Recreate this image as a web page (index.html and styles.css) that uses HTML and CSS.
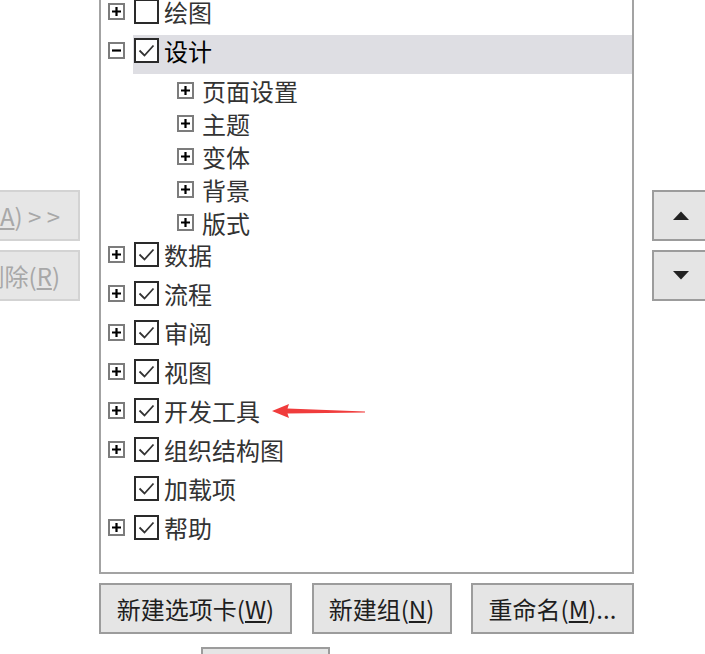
FILE: index.html
```html
<!DOCTYPE html>
<html lang="zh-CN">
<head>
<meta charset="utf-8">
<link rel="stylesheet" href="styles.css">
</head>
<body>
<div class="page">
  <div class="left-col">
    <div class="btn btn-disabled">添加(<u>A</u>) &gt; &gt;</div>
    <div class="btn btn-disabled">删除(<u>R</u>)</div>
  </div>

  <div class="center-col">
    <div class="tree">
      <div class="row">
        <div class="exp"><svg class="pm" viewBox="0 0 17 17"><rect x="1" y="1" width="15" height="15" fill="#fff" stroke="#7c7c7c" stroke-width="2"/><path d="M4 8.5H13M8.5 4V13" stroke="#000" stroke-width="2.2"/></svg></div>
        <div class="item"><span class="cb"></span><span class="label">绘图</span></div>
      </div>
      <div class="row sel">
        <div class="exp"><svg class="pm" viewBox="0 0 17 17"><rect x="1" y="1" width="15" height="15" fill="#fff" stroke="#7c7c7c" stroke-width="2"/><path d="M4 8.5H13" stroke="#000" stroke-width="2.2"/></svg></div>
        <div class="item"><span class="cb checked"><svg viewBox="0 0 21 21"><path d="M3.5 10.5L8.5 15.5L17.5 5.5" fill="none" stroke="#333" stroke-width="1.8"/></svg></span><span class="label dark">设计</span></div>
      </div>
      <div class="subrow"><svg class="pm" viewBox="0 0 17 17"><rect x="1" y="1" width="15" height="15" fill="#fff" stroke="#7c7c7c" stroke-width="2"/><path d="M4 8.5H13M8.5 4V13" stroke="#000" stroke-width="2.2"/></svg><span class="label">页面设置</span></div>
      <div class="subrow"><svg class="pm" viewBox="0 0 17 17"><rect x="1" y="1" width="15" height="15" fill="#fff" stroke="#7c7c7c" stroke-width="2"/><path d="M4 8.5H13M8.5 4V13" stroke="#000" stroke-width="2.2"/></svg><span class="label">主题</span></div>
      <div class="subrow"><svg class="pm" viewBox="0 0 17 17"><rect x="1" y="1" width="15" height="15" fill="#fff" stroke="#7c7c7c" stroke-width="2"/><path d="M4 8.5H13M8.5 4V13" stroke="#000" stroke-width="2.2"/></svg><span class="label">变体</span></div>
      <div class="subrow"><svg class="pm" viewBox="0 0 17 17"><rect x="1" y="1" width="15" height="15" fill="#fff" stroke="#7c7c7c" stroke-width="2"/><path d="M4 8.5H13M8.5 4V13" stroke="#000" stroke-width="2.2"/></svg><span class="label">背景</span></div>
      <div class="subrow"><svg class="pm" viewBox="0 0 17 17"><rect x="1" y="1" width="15" height="15" fill="#fff" stroke="#7c7c7c" stroke-width="2"/><path d="M4 8.5H13M8.5 4V13" stroke="#000" stroke-width="2.2"/></svg><span class="label">版式</span></div>

      <div class="row">
        <div class="exp"><svg class="pm" viewBox="0 0 17 17"><rect x="1" y="1" width="15" height="15" fill="#fff" stroke="#7c7c7c" stroke-width="2"/><path d="M4 8.5H13M8.5 4V13" stroke="#000" stroke-width="2.2"/></svg></div>
        <div class="item"><span class="cb checked"><svg viewBox="0 0 21 21"><path d="M3.5 10.5L8.5 15.5L17.5 5.5" fill="none" stroke="#333" stroke-width="1.8"/></svg></span><span class="label">数据</span></div>
      </div>
      <div class="row">
        <div class="exp"><svg class="pm" viewBox="0 0 17 17"><rect x="1" y="1" width="15" height="15" fill="#fff" stroke="#7c7c7c" stroke-width="2"/><path d="M4 8.5H13M8.5 4V13" stroke="#000" stroke-width="2.2"/></svg></div>
        <div class="item"><span class="cb checked"><svg viewBox="0 0 21 21"><path d="M3.5 10.5L8.5 15.5L17.5 5.5" fill="none" stroke="#333" stroke-width="1.8"/></svg></span><span class="label">流程</span></div>
      </div>
      <div class="row">
        <div class="exp"><svg class="pm" viewBox="0 0 17 17"><rect x="1" y="1" width="15" height="15" fill="#fff" stroke="#7c7c7c" stroke-width="2"/><path d="M4 8.5H13M8.5 4V13" stroke="#000" stroke-width="2.2"/></svg></div>
        <div class="item"><span class="cb checked"><svg viewBox="0 0 21 21"><path d="M3.5 10.5L8.5 15.5L17.5 5.5" fill="none" stroke="#333" stroke-width="1.8"/></svg></span><span class="label">审阅</span></div>
      </div>
      <div class="row">
        <div class="exp"><svg class="pm" viewBox="0 0 17 17"><rect x="1" y="1" width="15" height="15" fill="#fff" stroke="#7c7c7c" stroke-width="2"/><path d="M4 8.5H13M8.5 4V13" stroke="#000" stroke-width="2.2"/></svg></div>
        <div class="item"><span class="cb checked"><svg viewBox="0 0 21 21"><path d="M3.5 10.5L8.5 15.5L17.5 5.5" fill="none" stroke="#333" stroke-width="1.8"/></svg></span><span class="label">视图</span></div>
      </div>
      <div class="row">
        <div class="exp"><svg class="pm" viewBox="0 0 17 17"><rect x="1" y="1" width="15" height="15" fill="#fff" stroke="#7c7c7c" stroke-width="2"/><path d="M4 8.5H13M8.5 4V13" stroke="#000" stroke-width="2.2"/></svg></div>
        <div class="item"><span class="cb checked"><svg viewBox="0 0 21 21"><path d="M3.5 10.5L8.5 15.5L17.5 5.5" fill="none" stroke="#333" stroke-width="1.8"/></svg></span><span class="label">开发工具</span>
          <svg class="arrow" viewBox="0 0 94 16"><path d="M0 8L17 1L15.5 5.5L93 8.6L93 9.4L15.5 10.5L17 15Z" fill="#f03c3c"/></svg>
        </div>
      </div>
      <div class="row">
        <div class="exp"><svg class="pm" viewBox="0 0 17 17"><rect x="1" y="1" width="15" height="15" fill="#fff" stroke="#7c7c7c" stroke-width="2"/><path d="M4 8.5H13M8.5 4V13" stroke="#000" stroke-width="2.2"/></svg></div>
        <div class="item"><span class="cb checked"><svg viewBox="0 0 21 21"><path d="M3.5 10.5L8.5 15.5L17.5 5.5" fill="none" stroke="#333" stroke-width="1.8"/></svg></span><span class="label">组织结构图</span></div>
      </div>
      <div class="row">
        <div class="exp"></div>
        <div class="item"><span class="cb checked"><svg viewBox="0 0 21 21"><path d="M3.5 10.5L8.5 15.5L17.5 5.5" fill="none" stroke="#333" stroke-width="1.8"/></svg></span><span class="label">加载项</span></div>
      </div>
      <div class="row">
        <div class="exp"><svg class="pm" viewBox="0 0 17 17"><rect x="1" y="1" width="15" height="15" fill="#fff" stroke="#7c7c7c" stroke-width="2"/><path d="M4 8.5H13M8.5 4V13" stroke="#000" stroke-width="2.2"/></svg></div>
        <div class="item"><span class="cb checked"><svg viewBox="0 0 21 21"><path d="M3.5 10.5L8.5 15.5L17.5 5.5" fill="none" stroke="#333" stroke-width="1.8"/></svg></span><span class="label">帮助</span></div>
      </div>
    </div>

    <div class="bottom-btns">
      <div class="btn b1">新建选项卡(<u>W</u>)</div>
      <div class="btn b2">新建组(<u>N</u>)</div>
      <div class="btn b3">重命名(<u>M</u>)...</div>
    </div>
    <div class="btn partial"></div>
  </div>

  <div class="right-col">
    <div class="btn arrow-btn"><svg class="tri" viewBox="0 0 16 9"><path d="M0 9L8 0.5L16 9Z" fill="#222"/></svg></div>
    <div class="btn arrow-btn"><svg class="tri" viewBox="0 0 16 9"><path d="M0 0L16 0L8 8.5Z" fill="#222"/></svg></div>
  </div>
</div>
</body>
</html>
```

FILE: styles.css
```css
html, body {
  margin: 0;
  padding: 0;
  background: #fff;
}

body {
  width: 705px;
  height: 654px;
  overflow: hidden;
  font-family: "Noto Sans CJK SC", "Noto Sans", sans-serif;
  font-size: 24px;
}

.page {
  display: flex;
  align-items: flex-start;
  width: 760px;
}

.btn {
  box-sizing: border-box;
  height: 51px;
  display: flex;
  align-items: center;
  justify-content: center;
  background: #e5e5e5;
  border: 2px solid #9c9c9c;
  color: #1e1e1e;
  white-space: nowrap;
  line-height: 1;
}

/* left column (cut off) */
.left-col {
  display: flex;
  flex-direction: column;
  gap: 9px;
  width: 140px;
  margin-left: -60px;
  padding-top: 190px;
  flex-shrink: 0;
}

.btn-disabled {
  background: #e6e6e6;
  border-color: #d3d3d3;
  color: #a8a8a8;
  justify-content: flex-end;
  padding-right: 18px;
}

/* center column */
.center-col {
  margin-left: 19px;
  width: 535px;
  flex-shrink: 0;
  display: flex;
  flex-direction: column;
}

.tree {
  box-sizing: border-box;
  height: 582px;
  margin-top: -8px;
  border: 2px solid #a3a3a3;
  padding-top: 2px;
  background: #fff;
  overflow: hidden;
}

.row {
  display: flex;
  height: 39px;
}

.exp {
  width: 32px;
  height: 31px;
  display: flex;
  align-items: center;
  flex-shrink: 0;
}

.exp .pm {
  margin-left: 7px;
}

.pm {
  width: 17px;
  height: 17px;
  display: block;
  flex-shrink: 0;
}

.item {
  position: relative;
  flex: 1;
  height: 31px;
  padding-bottom: 8px;
  display: flex;
  align-items: center;
}

.row.sel .item {
  background: #dedee3;
}

.cb {
  box-sizing: border-box;
  width: 25px;
  height: 25px;
  margin-left: 1px;
  border: 2px solid #2a2a2a;
  background: #fff;
  flex-shrink: 0;
  display: flex;
  align-items: center;
  justify-content: center;
}

.cb svg {
  width: 21px;
  height: 21px;
  display: block;
}

.label {
  margin-left: 5px;
  color: #333;
  line-height: 26px;
  white-space: nowrap;
}

.label.dark {
  color: #000;
}

.subrow {
  display: flex;
  align-items: center;
  height: 33px;
  padding-left: 76px;
}

.subrow .label {
  margin-left: 8px;
}

.arrow {
  position: absolute;
  left: 139px;
  top: 8px;
  width: 94px;
  height: 16px;
}

.bottom-btns {
  display: flex;
  justify-content: space-between;
  margin-top: 9px;
}

.b1 { width: 193px; }
.b2 { width: 140px; }
.b3 { width: 163px; }

.partial {
  width: 129px;
  margin-top: 13px;
  margin-left: 102px;
}

/* right column */
.right-col {
  display: flex;
  flex-direction: column;
  gap: 9px;
  margin-left: 18px;
  padding-top: 190px;
  width: 58px;
  flex-shrink: 0;
}

.arrow-btn {
  width: 58px;
}

.tri {
  width: 16px;
  height: 9px;
  display: block;
}
```
